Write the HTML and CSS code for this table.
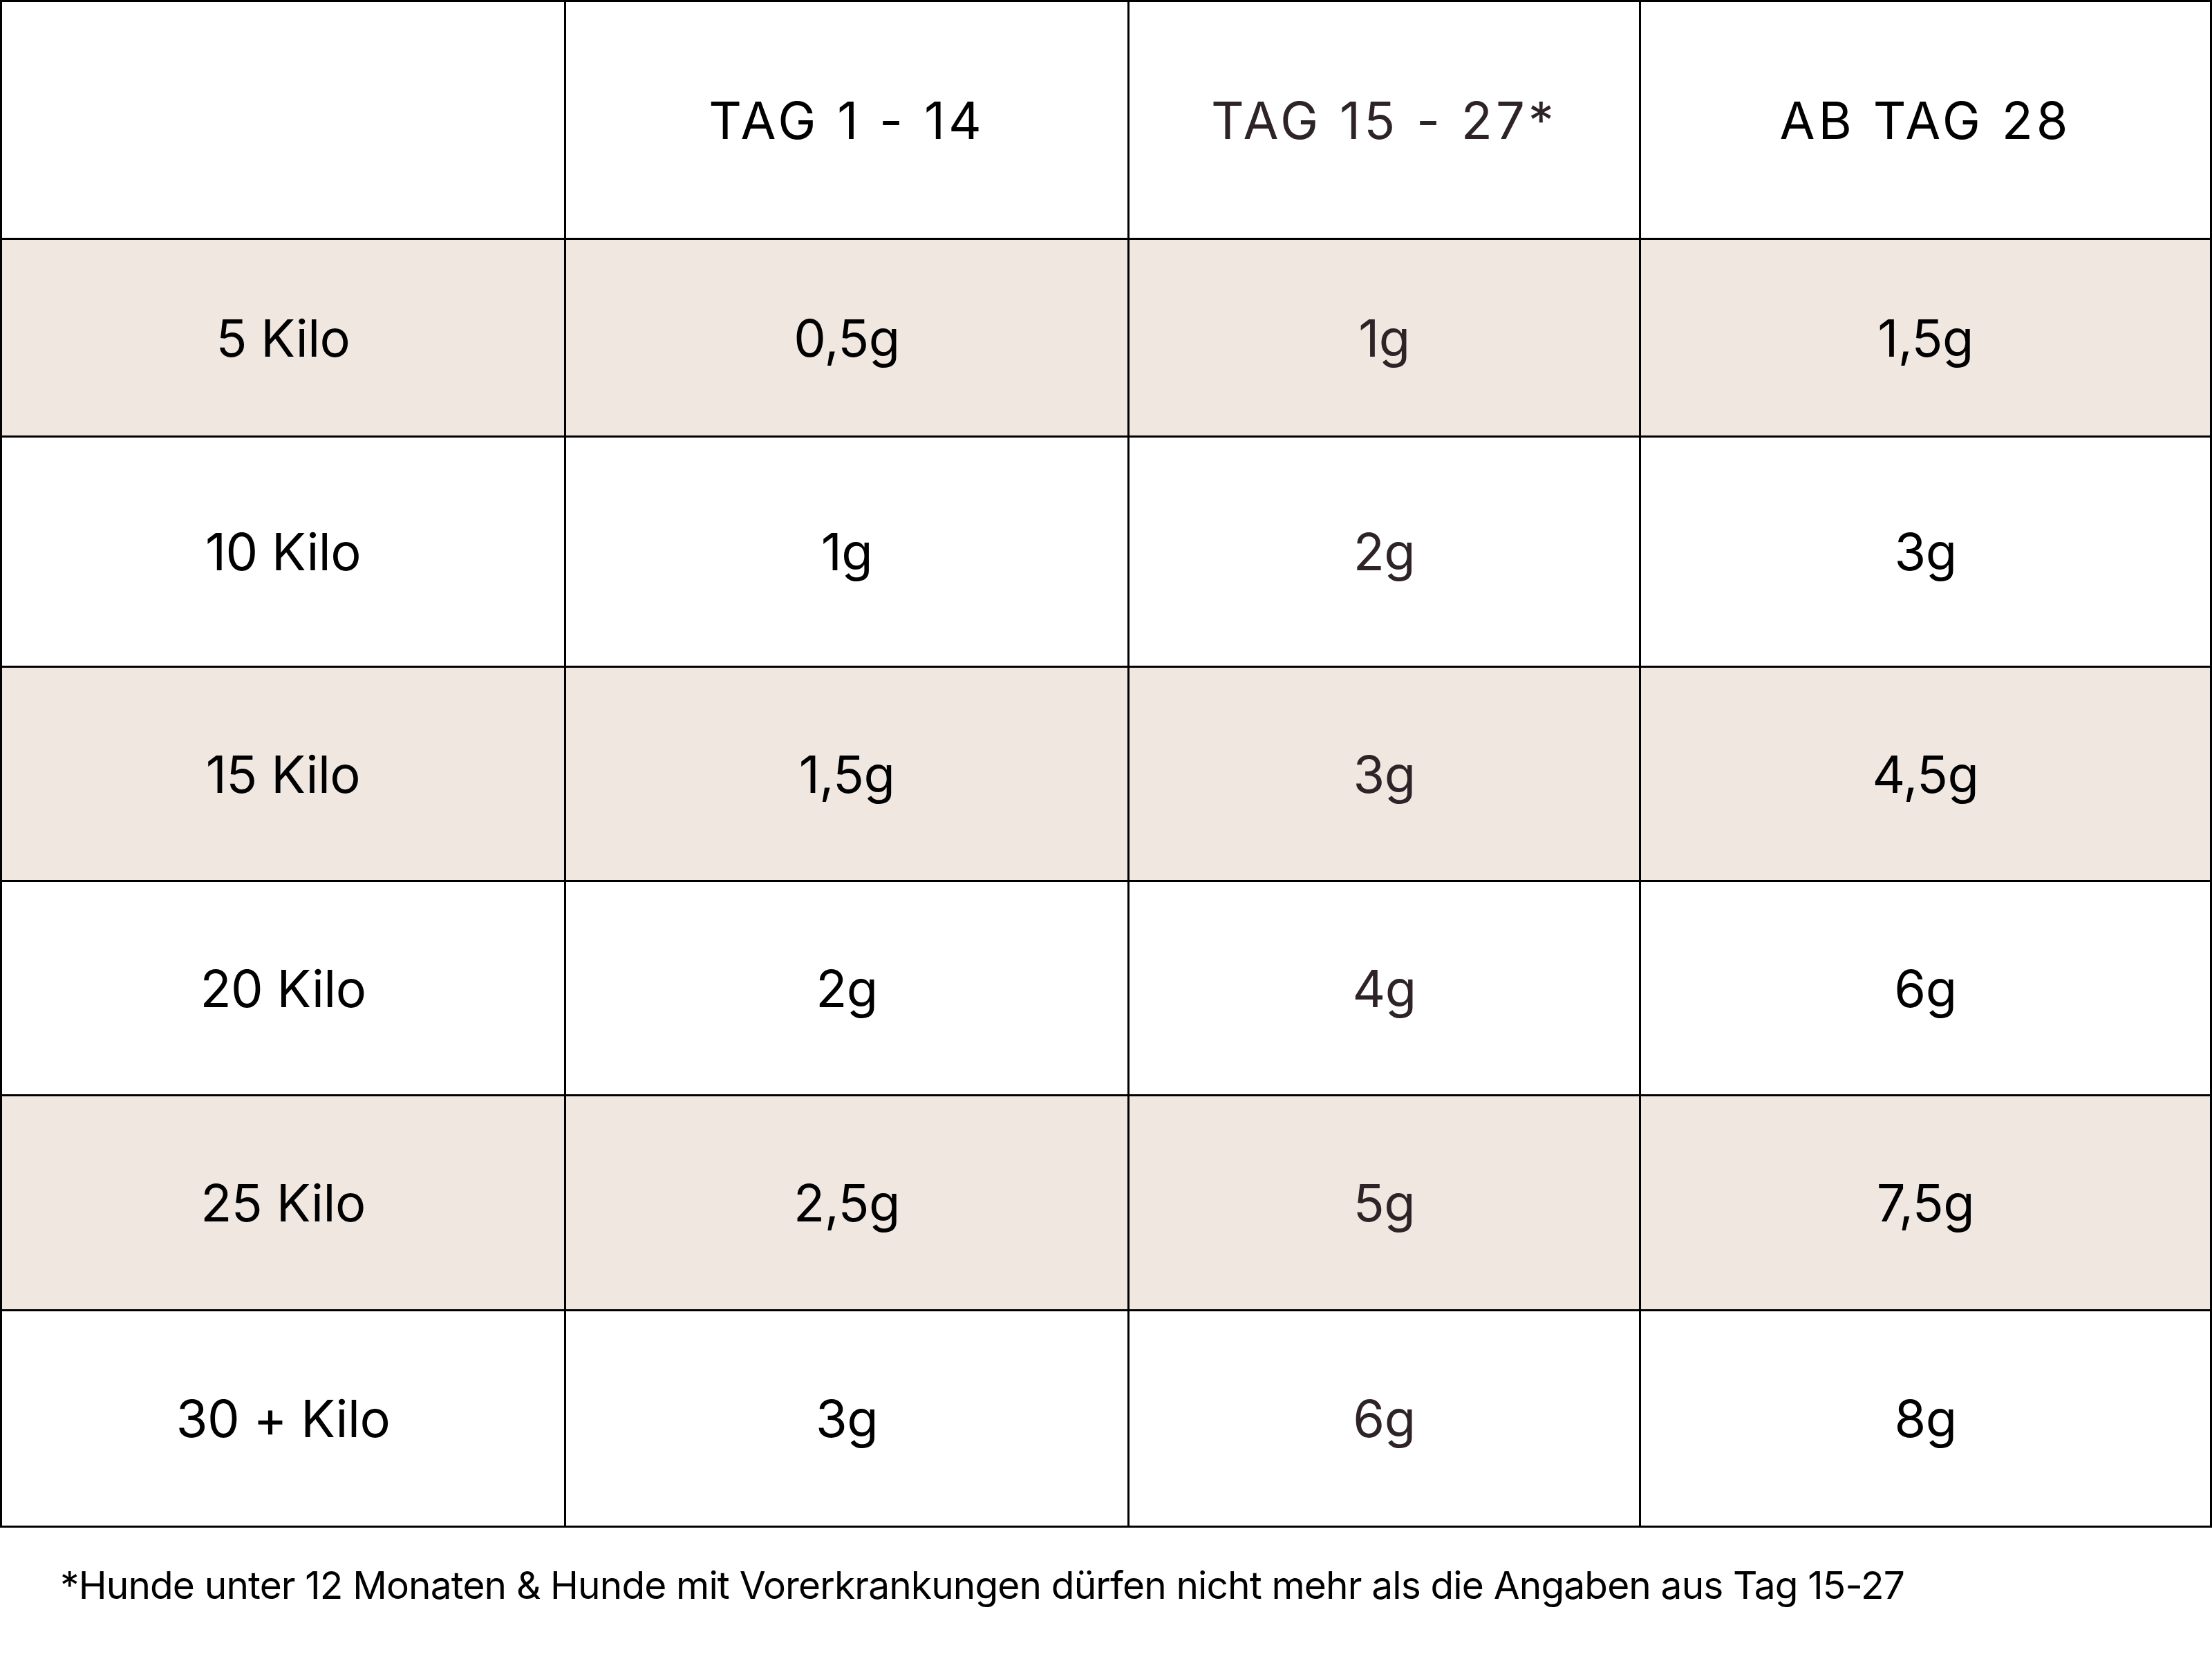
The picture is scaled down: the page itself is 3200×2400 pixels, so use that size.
FILE: index.html
```html
<!DOCTYPE html>
<html lang="de">
<head>
<meta charset="utf-8">
<title>Dosierung</title>
<link rel="stylesheet" href="styles.css">
</head>
<body>
<div class="table">
  <div class="cell head"></div>
  <div class="cell head">TAG 1 - 14</div>
  <div class="cell head brown">TAG 15 - 27*</div>
  <div class="cell head">AB TAG 28</div>

  <div class="cell tint">5 Kilo</div>
  <div class="cell tint">0,5g</div>
  <div class="cell tint brown">1g</div>
  <div class="cell tint">1,5g</div>

  <div class="cell">10 Kilo</div>
  <div class="cell">1g</div>
  <div class="cell brown">2g</div>
  <div class="cell">3g</div>

  <div class="cell tint">15 Kilo</div>
  <div class="cell tint">1,5g</div>
  <div class="cell tint brown">3g</div>
  <div class="cell tint">4,5g</div>

  <div class="cell">20 Kilo</div>
  <div class="cell">2g</div>
  <div class="cell brown">4g</div>
  <div class="cell">6g</div>

  <div class="cell tint">25 Kilo</div>
  <div class="cell tint">2,5g</div>
  <div class="cell tint brown">5g</div>
  <div class="cell tint">7,5g</div>

  <div class="cell">30 + Kilo</div>
  <div class="cell">3g</div>
  <div class="cell brown">6g</div>
  <div class="cell">8g</div>
</div>
<p class="note">*Hunde unter 12 Monaten &amp; Hunde mit Vorerkrankungen dürfen nicht mehr als die Angaben aus Tag 15-27</p>
</body>
</html>
```

FILE: styles.css
```css
html, body {
  margin: 0;
  padding: 0;
  background: #ffffff;
}

body {
  width: 3200px;
  min-height: 2400px;
  font-family: Inter, "Liberation Sans", sans-serif;
  color: #000000;
}

.table {
  display: grid;
  grid-template-columns: 813px 812px 737px 823px;
  grid-template-rows: 341px 283px 330px 307px 307px 308px 310px;
  gap: 3px;
  padding: 3px;
  background: #000000;
  width: 3200px;
  box-sizing: border-box;
}

.cell {
  display: flex;
  align-items: center;
  justify-content: center;
  background: #ffffff;
  font-size: 74px;
  font-weight: 400;
  line-height: 1;
  letter-spacing: -0.5px;
}

.cell.tint {
  background: #f0e7e1;
}

.cell.head {
  letter-spacing: 5px;
}

.cell.brown {
  color: #2e2326;
}

.note {
  margin: 0;
  padding: 48px 0 40px 87px;
  font-size: 55px;
  line-height: 1.3;
  letter-spacing: -0.85px;
  color: #000000;
}
```
